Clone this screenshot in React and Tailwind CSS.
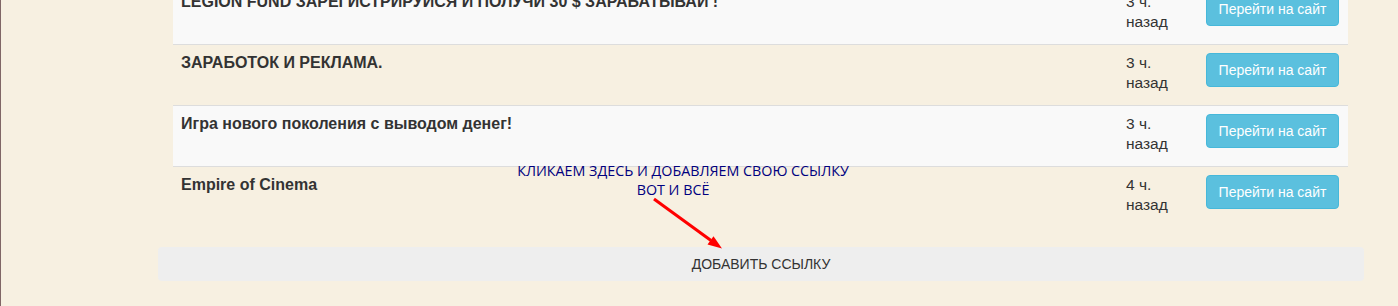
import React from 'react';

const rows = [
  { title: 'LEGION FUND ЗАРЕГИСТРИРУЙСЯ И ПОЛУЧИ 30 $ ЗАРАБАТЫВАЙ !', time: '3 ч. назад', striped: true },
  { title: 'ЗАРАБОТОК И РЕКЛАМА.', time: '3 ч. назад', striped: false },
  { title: 'Игра нового поколения с выводом денег!', time: '3 ч. назад', striped: true },
  { title: 'Empire of Cinema', time: '4 ч. назад', striped: false },
];

const LinkRow = ({ title, time, striped }) => (
  <div className={`flex h-[61px] border-t border-[#dddddd] ${striped ? 'bg-[#f9f9f9]' : ''}`}>
    <div className="flex-1 p-2 text-[16px] font-bold">{title}</div>
    <div className="w-[80px] p-2 text-[15.5px]">{time}</div>
    <div className="w-[150px] py-2 pl-2 pr-[9px]">
      <button className="h-[34px] w-[133px] rounded border border-[#46b8da] bg-[#5bc0de] text-white">
        Перейти на сайт
      </button>
    </div>
  </div>
);

export default function App() {
  return (
    <div className="relative h-[306px] w-[1398px] overflow-hidden border-l border-[#806666] bg-[#f7f0e1] font-['Liberation_Sans',Arial,sans-serif] text-[14px] leading-5 text-[#333333]">
      <div className="ml-[157px] -mt-[17px] w-[1206px]">
        <div className="ml-[15px] mr-[16px]">
          {rows.map((r, i) => (
            <LinkRow key={i} {...r} />
          ))}
        </div>
        <div className="mt-5 flex h-[34px] items-center justify-center rounded bg-[#eeeeee] text-[14px] text-[#333333]">
          ДОБАВИТЬ ССЫЛКУ
        </div>
      </div>

      {/* annotation over the table */}
      <div className="absolute left-[432px] top-[161px] w-[500px] text-center font-['Open_Sans',sans-serif] text-[14.3px] leading-[19px] text-[#000080]">
        <div>КЛИКАЕМ ЗДЕСЬ И ДОБАВЛЯЕМ СВОЮ ССЫЛКУ</div>
        <div className="pr-[20px]">ВОТ И ВСЁ</div>
      </div>
      <svg className="absolute left-0 top-0" width="1398" height="306">
        <line x1="653" y1="199" x2="710" y2="240.5" stroke="#ff0000" strokeWidth="3" />
        <polygon points="721,248.5 706.5,244.5 712.5,236.3" fill="#ff0000" />
      </svg>
    </div>
  );
}
